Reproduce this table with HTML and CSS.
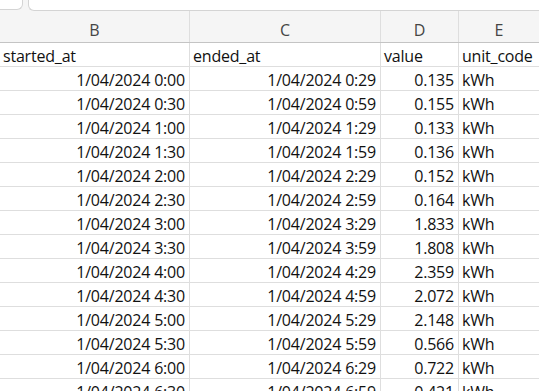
FILE: index.html
```html
<!DOCTYPE html>
<html>
<head>
<meta charset="utf-8">
<link rel="stylesheet" href="styles.css">
</head>
<body>
<div class="sheet">
  <div class="topbar">
    <div class="namebox"></div>
    <div class="formula"></div>
  </div>
  <div class="grid colhead">
    <div class="ch">B</div><div class="ch">C</div><div class="ch">D</div><div class="ch">E</div>
  </div>
  <div class="grid row">
    <div class="c">started_at</div><div class="c">ended_at</div><div class="c">value</div><div class="c">unit_code</div>
  </div>
  <div class="grid row"><div class="c r">1/04/2024 0:00</div><div class="c r">1/04/2024 0:29</div><div class="c r">0.135</div><div class="c">kWh</div></div>
  <div class="grid row"><div class="c r">1/04/2024 0:30</div><div class="c r">1/04/2024 0:59</div><div class="c r">0.155</div><div class="c">kWh</div></div>
  <div class="grid row"><div class="c r">1/04/2024 1:00</div><div class="c r">1/04/2024 1:29</div><div class="c r">0.133</div><div class="c">kWh</div></div>
  <div class="grid row"><div class="c r">1/04/2024 1:30</div><div class="c r">1/04/2024 1:59</div><div class="c r">0.136</div><div class="c">kWh</div></div>
  <div class="grid row"><div class="c r">1/04/2024 2:00</div><div class="c r">1/04/2024 2:29</div><div class="c r">0.152</div><div class="c">kWh</div></div>
  <div class="grid row"><div class="c r">1/04/2024 2:30</div><div class="c r">1/04/2024 2:59</div><div class="c r">0.164</div><div class="c">kWh</div></div>
  <div class="grid row"><div class="c r">1/04/2024 3:00</div><div class="c r">1/04/2024 3:29</div><div class="c r">1.833</div><div class="c">kWh</div></div>
  <div class="grid row"><div class="c r">1/04/2024 3:30</div><div class="c r">1/04/2024 3:59</div><div class="c r">1.808</div><div class="c">kWh</div></div>
  <div class="grid row"><div class="c r">1/04/2024 4:00</div><div class="c r">1/04/2024 4:29</div><div class="c r">2.359</div><div class="c">kWh</div></div>
  <div class="grid row"><div class="c r">1/04/2024 4:30</div><div class="c r">1/04/2024 4:59</div><div class="c r">2.072</div><div class="c">kWh</div></div>
  <div class="grid row"><div class="c r">1/04/2024 5:00</div><div class="c r">1/04/2024 5:29</div><div class="c r">2.148</div><div class="c">kWh</div></div>
  <div class="grid row"><div class="c r">1/04/2024 5:30</div><div class="c r">1/04/2024 5:59</div><div class="c r">0.566</div><div class="c">kWh</div></div>
  <div class="grid row"><div class="c r">1/04/2024 6:00</div><div class="c r">1/04/2024 6:29</div><div class="c r">0.722</div><div class="c">kWh</div></div>
  <div class="grid row"><div class="c r">1/04/2024 6:30</div><div class="c r">1/04/2024 6:59</div><div class="c r">0.421</div><div class="c">kWh</div></div>
</div>
</body>
</html>
```
FILE: styles.css
```css
html, body {
  margin: 0;
  padding: 0;
  background: #ffffff;
  overflow: hidden;
}
.sheet {
  width: 539px;
  height: 391px;
  overflow: hidden;
  font-family: "Open Sans", "Noto Sans", sans-serif;
  color: #111;
}
.topbar {
  display: flex;
  gap: 5px;
  height: 11px;
  background: #f5f5f5;
}
.namebox {
  width: 23px;
  height: 10px;
  background: #fff;
  border-right: 1px solid #d4d4d4;
  border-bottom: 1px solid #d4d4d4;
  border-bottom-right-radius: 6px;
  box-sizing: border-box;
}
.formula {
  flex: 1;
  height: 11px;
  background: #fff;
  border-left: 1px solid #d4d4d4;
  border-bottom: 1px solid #d4d4d4;
  border-bottom-left-radius: 6px;
  box-sizing: border-box;
}
.grid {
  display: grid;
  grid-template-columns: 190px 191px 78px 81px;
}
.colhead {
  height: 32px;
  background: #f5f5f5;
  border-bottom: 1px solid #c4c4c4;
  box-sizing: border-box;
}
.ch {
  text-align: center;
  padding-top: 8px;
  line-height: 23px;
  color: #454545;
  font-size: 16px;
  border-right: 1px solid #dedede;
}
.row {
  height: 24px;
  box-sizing: border-box;
  border-bottom: 1px solid #dedede;
}
.c {
  font-size: 16px;
  letter-spacing: -0.2px;
  line-height: 22px;
  padding: 2px 4px 0 3px;
  border-right: 1px solid #dedede;
  white-space: nowrap;
  overflow: hidden;
}
.r {
  text-align: right;
}
```
